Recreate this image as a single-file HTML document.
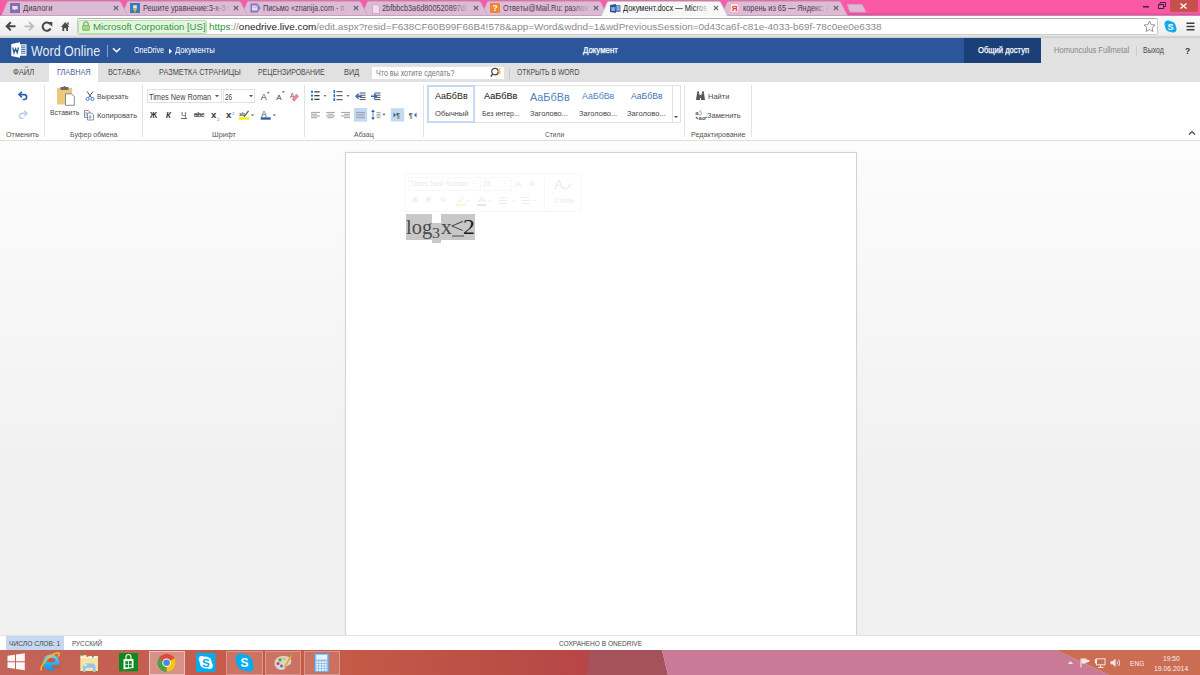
<!DOCTYPE html>
<html><head><meta charset="utf-8">
<style>
*{margin:0;padding:0;box-sizing:border-box}
html,body{width:1200px;height:675px;overflow:hidden;background:#f0f0f0;position:relative;font-family:"Liberation Sans",sans-serif}
.a{position:absolute}
.t{position:absolute;white-space:nowrap;line-height:1;transform-origin:0 0}
svg{position:absolute;overflow:visible}
</style></head><body>
<svg class="a" style="left:0;top:0" width="1200" height="16">
<rect x="0" y="0" width="1200" height="16" fill="#fb58a8"/>
<rect x="0" y="0" width="845" height="1" fill="#e06aa8"/>
<rect x="0" y="13.5" width="1200" height="1.5" fill="#e4509b"/>
<rect x="0" y="15" width="1200" height="1" fill="#c48ba8"/>
<path d="M721.5,15.5 L727,2.5 Q727.6,1.3 729.5,1.3 L838.5,1.3 Q840.2,1.3 840.8,2.5 L847.5,15.5 Z" fill="#dcbbd4" stroke="#c79fb9" stroke-width="0.7"/>
<path d="M481.5,15.5 L487,2.5 Q487.6,1.3 489.5,1.3 L598.5,1.3 Q600.2,1.3 600.8,2.5 L607.5,15.5 Z" fill="#dcbbd4" stroke="#c79fb9" stroke-width="0.7"/>
<path d="M361.5,15.5 L367,2.5 Q367.6,1.3 369.5,1.3 L478.5,1.3 Q480.2,1.3 480.8,2.5 L487.5,15.5 Z" fill="#dcbbd4" stroke="#c79fb9" stroke-width="0.7"/>
<path d="M241.5,15.5 L247,2.5 Q247.6,1.3 249.5,1.3 L358.5,1.3 Q360.2,1.3 360.8,2.5 L367.5,15.5 Z" fill="#dcbbd4" stroke="#c79fb9" stroke-width="0.7"/>
<path d="M121.5,15.5 L127,2.5 Q127.6,1.3 129.5,1.3 L238.5,1.3 Q240.2,1.3 240.8,2.5 L247.5,15.5 Z" fill="#dcbbd4" stroke="#c79fb9" stroke-width="0.7"/>
<path d="M1.5,15.5 L7,2.5 Q7.6,1.3 9.5,1.3 L118.5,1.3 Q120.2,1.3 120.8,2.5 L127.5,15.5 Z" fill="#dcbbd4" stroke="#c79fb9" stroke-width="0.7"/>
<path d="M847.5,4.5 L861,4.5 Q862,4.5 862.6,5.5 L866,12 L851,12 Q850,12 849.6,11 Z" fill="#dcbbd4" stroke="#d9a6c6" stroke-width="0.8"/>
<path d="M601.5,15.5 L607,2.5 Q607.6,1.3 609.5,1.3 L718.5,1.3 Q720.2,1.3 720.8,2.5 L727.5,15.5 " fill="#f7f7f7" stroke="#b9b9b9" stroke-width="0.7"/>
<rect x="601.8" y="14.6" width="124.6" height="2" fill="#f7f7f7"/>
<rect x="1170" y="0" width="28" height="12" fill="#c7504c"/>
<path d="M1180.5,3.5 L1186.5,8.5 M1186.5,3.5 L1180.5,8.5" stroke="#fff" stroke-width="1.4"/>
<rect x="1143" y="6" width="6" height="1.5" fill="#3a2a33"/>
<rect x="1158.5" y="4.5" width="5" height="4" fill="none" stroke="#3a2a33" stroke-width="1"/><path d="M1160,4.5 V2.5 H1165.5 V6.5 H1163.5" fill="none" stroke="#3a2a33" stroke-width="1"/>
</svg>
<svg class="a" style="left:10px;top:3px" width="10" height="10"><rect width="10" height="10" fill="#7b74b0"/><path d="M2.3,3 H7.7 V6.2 H5.6 L4.6,7.6 L4,6.2 H2.3 Z" fill="#f6d9ef"/></svg>
<svg class="a" style="left:130px;top:3px" width="10" height="10"><rect width="10" height="10" fill="#3f7ab4"/><path d="M2.5,5.5 H7.5 L5.6,7.5 L5.4,9.6 H4.6 L4.4,7.5 Z" fill="#f6c21a"/><rect x="3.2" y="2.3" width="3.6" height="3" fill="#e8e6f4"/></svg>
<svg class="a" style="left:250px;top:3px" width="11" height="10"><path d="M0.5,0.5 H7.5 L10.5,5 L7.5,9.5 H0.5 Z" fill="#7d78bf"/><rect x="2" y="2.5" width="5.5" height="5" fill="#f0dff2"/><path d="M2.3,3 L4.7,5 L7.2,3" stroke="#a69bd1" stroke-width="0.8" fill="none"/></svg>
<svg class="a" style="left:371.5px;top:3.5px" width="8" height="10"><path d="M0.5,0.5 H5 L7.5,3 V9.5 H0.5 Z" fill="#f3dcec" stroke="#c7a2bb" stroke-width="0.8"/></svg>
<svg class="a" style="left:490px;top:3px" width="10" height="10"><rect width="10" height="10" rx="1" fill="#ee8530"/><text x="5" y="8.3" font-size="8.5" font-weight="700" text-anchor="middle" fill="#fff" font-family="Liberation Sans">?</text></svg>
<svg class="a" style="left:610px;top:4px" width="11" height="9"><path d="M0,1 L6,0 V9 L0,8 Z" fill="#2b5797"/><rect x="6" y="1" width="4.5" height="7" fill="#5b86c4"/><path d="M7,2.5 H9.5 M7,4 H9.5 M7,5.5 H9.5" stroke="#dbe6f5" stroke-width="0.6"/><text x="3" y="6.5" font-size="4.5" font-weight="700" text-anchor="middle" fill="#c8d8f0" font-family="Liberation Sans">W</text></svg>
<svg class="a" style="left:730px;top:3px" width="10" height="10"><path d="M0.5,0.5 H7.5 L9.5,5 L7.5,9.5 H0.5 Z" fill="#fbe3ea" stroke="#e6a7b8" stroke-width="0.6"/><text x="4.6" y="8.2" font-size="8" font-weight="700" text-anchor="middle" fill="#e3393c" font-family="Liberation Sans">Я</text></svg>
<svg class="a" style="left:112.5px;top:5px" width="6" height="6"><path d="M0.8,0.8 L5.2,5.2 M5.2,0.8 L0.8,5.2" stroke="#6a5865" stroke-width="1.1"/></svg>
<svg class="a" style="left:232.5px;top:5px" width="6" height="6"><path d="M0.8,0.8 L5.2,5.2 M5.2,0.8 L0.8,5.2" stroke="#6a5865" stroke-width="1.1"/></svg>
<svg class="a" style="left:352.5px;top:5px" width="6" height="6"><path d="M0.8,0.8 L5.2,5.2 M5.2,0.8 L0.8,5.2" stroke="#6a5865" stroke-width="1.1"/></svg>
<svg class="a" style="left:472.5px;top:5px" width="6" height="6"><path d="M0.8,0.8 L5.2,5.2 M5.2,0.8 L0.8,5.2" stroke="#6a5865" stroke-width="1.1"/></svg>
<svg class="a" style="left:592.5px;top:5px" width="6" height="6"><path d="M0.8,0.8 L5.2,5.2 M5.2,0.8 L0.8,5.2" stroke="#6a5865" stroke-width="1.1"/></svg>
<svg class="a" style="left:712.5px;top:5px" width="6" height="6"><path d="M0.8,0.8 L5.2,5.2 M5.2,0.8 L0.8,5.2" stroke="#666" stroke-width="1.1"/></svg>
<svg class="a" style="left:832.5px;top:5px" width="6" height="6"><path d="M0.8,0.8 L5.2,5.2 M5.2,0.8 L0.8,5.2" stroke="#6a5865" stroke-width="1.1"/></svg>
<div class="a" style="left:143px;top:0;width:86px;height:15px;overflow:hidden"><div class="t" style="left:0;top:4.00px;font-size:8.5px;color:#4a3d4e;transform:scaleX(0.86)">Решите уравнение:3-x-3=</div></div>
<div class="a" style="left:213px;top:2px;width:17px;height:12px;background:linear-gradient(90deg,#dcbbd400,#dcbbd4)"></div>
<div class="a" style="left:262.75px;top:0;width:86px;height:15px;overflow:hidden"><div class="t" style="left:0;top:4.00px;font-size:8.5px;color:#4a3d4e;transform:scaleX(0.86)">Письмо «znanija.com - п</div></div>
<div class="a" style="left:332.75px;top:2px;width:17px;height:12px;background:linear-gradient(90deg,#dcbbd400,#dcbbd4)"></div>
<div class="a" style="left:382px;top:0;width:86px;height:15px;overflow:hidden"><div class="t" style="left:0;top:4.00px;font-size:8.5px;color:#4a3d4e;transform:scaleX(0.86)">2bfbbcb3a6d800520897d0</div></div>
<div class="a" style="left:452px;top:2px;width:17px;height:12px;background:linear-gradient(90deg,#dcbbd400,#dcbbd4)"></div>
<div class="a" style="left:502.8px;top:0;width:86px;height:15px;overflow:hidden"><div class="t" style="left:0;top:4.00px;font-size:8.5px;color:#4a3d4e;transform:scaleX(0.86)">Ответы@Mail.Ru: разлож</div></div>
<div class="a" style="left:572.8px;top:2px;width:17px;height:12px;background:linear-gradient(90deg,#dcbbd400,#dcbbd4)"></div>
<div class="a" style="left:622.75px;top:0;width:86px;height:15px;overflow:hidden"><div class="t" style="left:0;top:4.00px;font-size:8.5px;color:#222;transform:scaleX(0.88)">Документ.docx — Micros</div></div>
<div class="a" style="left:692.75px;top:2px;width:17px;height:12px;background:linear-gradient(90deg,#f7f7f700,#f7f7f7)"></div>
<div class="a" style="left:742.75px;top:0;width:86px;height:15px;overflow:hidden"><div class="t" style="left:0;top:4.00px;font-size:8.5px;color:#4a3d4e;transform:scaleX(0.86)">корень из 65 — Яндекс: н</div></div>
<div class="a" style="left:812.75px;top:2px;width:17px;height:12px;background:linear-gradient(90deg,#dcbbd400,#dcbbd4)"></div>
<div class="a" style="left:0;top:16px;width:1200px;height:22px;background:linear-gradient(#fbfbfb,#f1f1f1 60%,#e9e9e9)"></div>
<div class="a" style="left:0;top:16px;width:1200px;height:1px;background:#fff"></div>
<div class="a" style="left:0;top:35px;width:1200px;height:1px;background:#e6e6e6"></div>
<div class="a" style="left:0;top:36px;width:1200px;height:2px;background:linear-gradient(#dcdcdc,#c9c9c9)"></div>
<svg class="a" style="left:0;top:15px" width="80" height="22"><path d="M7,11.3 H15.5 M10.8,7.2 L6.7,11.3 L10.8,15.4" stroke="#474747" stroke-width="2" fill="none"/><path d="M24.5,11.3 H33 M29,7.2 L33.2,11.3 L29,15.4" stroke="#bdbdbd" stroke-width="1.8" fill="none"/><path d="M50.3,9.2 A4.2,4.2 0 1 0 50.6,13.5" stroke="#474747" stroke-width="2" fill="none"/><path d="M47.5,7 H52.3 V11.8 Z" fill="#474747"/><path d="M61,12 L65.2,7 L69.4,12 H68 V16 H66.2 V13.3 H64.2 V16 H62.4 V12 Z" fill="#4a4a4a"/><rect x="67.2" y="7.3" width="1.5" height="2.5" fill="#4a4a4a"/></svg>
<div class="a" style="left:76.5px;top:18px;width:1081px;height:17px;background:#fff;border:1px solid #cbcbcb;border-top-color:#b0b0b0;border-radius:2px"></div>
<div class="a" style="left:78px;top:19.5px;width:129px;height:14px;background:#e5f4df;border:1px solid #b6dfa9;border-radius:2px"></div>
<svg class="a" style="left:82px;top:21px" width="8" height="10"><path d="M1.8,4.5 V3 A2.2,2.2 0 0 1 6.2,3 V4.5" stroke="#9a9a9a" stroke-width="1.2" fill="none"/><rect x="0.5" y="4.3" width="7" height="5.2" rx="0.8" fill="#8fd66b" stroke="#6fb24e" stroke-width="0.6"/><rect x="1" y="6.6" width="6" height="0.6" fill="#c9efb1"/></svg>
<svg class="a" style="left:1143px;top:19.7px" width="13" height="13"><path d="M6.5,1 L8.1,4.6 L12,5 L9.1,7.6 L9.9,11.5 L6.5,9.5 L3.1,11.5 L3.9,7.6 L1,5 L4.9,4.6 Z" fill="#fff" stroke="#8a8a8a" stroke-width="0.9" stroke-linejoin="round"/></svg>
<svg class="a" style="left:1163.5px;top:19.6px" width="13" height="13"><circle cx="4" cy="4" r="3.5" fill="#11a9ea"/><circle cx="9" cy="9" r="3.5" fill="#11a9ea"/><circle cx="6.5" cy="6.5" r="5.3" fill="#11a9ea"/><text x="6.5" y="9.8" font-size="9" font-weight="700" text-anchor="middle" fill="#fff" font-family="Liberation Sans">S</text></svg>
<svg class="a" style="left:1185.5px;top:21.5px" width="10" height="10"><path d="M0.5,1.3 H8.5 M0.5,4.5 H8.5 M0.5,7.7 H8.5" stroke="#3c3c3c" stroke-width="1.5"/></svg>
<div class="a" style="left:0;top:38px;width:964px;height:25px;background:#2b579a"></div>
<div class="a" style="left:964px;top:38px;width:77px;height:25px;background:#1b3f77"></div>
<div class="a" style="left:1041px;top:38px;width:159px;height:25px;background:#e1e1e1"></div>
<svg class="a" style="left:10.5px;top:42px" width="17" height="17"><path d="M0.3,2 L9,0.2 V15.8 L0.3,14 Z" fill="#fff"/><rect x="9" y="2.3" width="6.5" height="11.4" fill="#fff"/><path d="M10,4 H14.5 M10,5.8 H14.5 M10,7.6 H14.5 M10,9.4 H14.5 M10,11.2 H14.5" stroke="#2b579a" stroke-width="0.9"/><path d="M1.8,5.5 L3,10.8 L4.6,6.8 L6.2,10.8 L7.4,5.5" stroke="#2b579a" stroke-width="1.3" fill="none"/></svg>
<div class="a" style="left:107px;top:44.5px;width:1px;height:12px;background:#8aa3c9"></div>
<svg class="a" style="left:111.5px;top:47px" width="10" height="7"><path d="M1,1.2 L4.6,4.8 L8.2,1.2" stroke="#fff" stroke-width="1.5" fill="none"/></svg>
<svg class="a" style="left:168px;top:47.5px" width="5" height="7"><path d="M1,0.5 L4,3.2 L1,6 Z" fill="#fff"/></svg>
<div class="a" style="left:1135.5px;top:45.5px;width:1px;height:10px;background:#cdcdcd"></div>
<div class="a" style="left:0;top:63px;width:1200px;height:19px;background:#e1e1e1"></div>
<div class="a" style="left:49px;top:63px;width:48.5px;height:20px;background:#fff"></div>
<div class="a" style="left:372px;top:66.5px;width:132px;height:12.5px;background:#fff"></div>
<svg class="a" style="left:490px;top:67px" width="12" height="11"><circle cx="5" cy="4.6" r="3.3" stroke="#444" stroke-width="1.2" fill="none"/><path d="M2.7,7 L0.8,9.6" stroke="#444" stroke-width="1.4"/><path d="M9.8,1 L7.6,5.2 H9.4 L8,9.4 L11,4.4 H9.3 L10.6,1 Z" fill="#f3a81b"/></svg>
<div class="a" style="left:509px;top:67.5px;width:1px;height:11px;background:#c8c8c8"></div>
<div class="a" style="left:0;top:82px;width:1200px;height:58px;background:#fff"></div>
<div class="a" style="left:0;top:139.5px;width:1200px;height:1px;background:#dedede"></div>
<div class="a" style="left:43.9px;top:85px;width:1px;height:52px;background:#e3e3e3"></div>
<div class="a" style="left:142.0px;top:85px;width:1px;height:52px;background:#e3e3e3"></div>
<div class="a" style="left:304.1px;top:85px;width:1px;height:52px;background:#e3e3e3"></div>
<div class="a" style="left:422.8px;top:85px;width:1px;height:52px;background:#e3e3e3"></div>
<div class="a" style="left:684.1px;top:85px;width:1px;height:52px;background:#e3e3e3"></div>
<div class="a" style="left:750.8px;top:85px;width:1px;height:52px;background:#e3e3e3"></div>
<svg class="a" style="left:17px;top:90px" width="12" height="30"><path d="M2.5,4.6 H7.2 A2.45,2.45 0 0 1 7.2,9.5 H5.5" stroke="#2b63a8" stroke-width="1.6" fill="none"/><path d="M4.9,1.9 L2,4.6 L4.9,7.3" stroke="#2b63a8" stroke-width="1.6" fill="none"/><path d="M9.5,23.4 H4.8 A2.45,2.45 0 0 0 4.8,28.3 H6.5" stroke="#bcd2ea" stroke-width="1.6" fill="none"/><path d="M7.1,20.7 L10,23.4 L7.1,26.1" stroke="#bcd2ea" stroke-width="1.6" fill="none"/></svg>
<svg class="a" style="left:56px;top:86px" width="20" height="21"><rect x="1" y="2" width="15" height="16.5" fill="#edc77a"/><rect x="4.5" y="1" width="8" height="3" fill="#6b6b6b"/><circle cx="8.5" cy="1.2" r="1.2" fill="#6b6b6b"/><path d="M9.5,7.8 H15.5 L18.3,10.6 V19.3 H9.5 Z" fill="#fff" stroke="#7d7d7d" stroke-width="0.9"/></svg>
<svg class="a" style="left:84.5px;top:91px" width="10" height="10"><path d="M2,0.5 L6.8,7 M8,0.5 L3.2,7" stroke="#555" stroke-width="1"/><circle cx="2.6" cy="8" r="1.6" stroke="#4a86c8" stroke-width="1" fill="none"/><circle cx="7.4" cy="8" r="1.6" stroke="#4a86c8" stroke-width="1" fill="none"/></svg>
<svg class="a" style="left:84px;top:109.5px" width="11" height="11"><path d="M0.5,0.5 H4.5 L6,2 V7.5 H0.5 Z" fill="#fff" stroke="#777" stroke-width="0.8"/><path d="M3.5,3 H7.5 L9.5,5 V10 H3.5 Z" fill="#fff" stroke="#777" stroke-width="0.8"/><rect x="4.8" y="5.5" width="2.5" height="3" fill="#8db3de"/><rect x="1.5" y="2" width="1.2" height="4" fill="#8db3de"/></svg>
<div class="a" style="left:147px;top:89.4px;width:74.5px;height:13.6px;border:1px solid #e1e1e1;background:#fff"></div>
<div class="a" style="left:223.4px;top:89.4px;width:32px;height:13.6px;border:1px solid #e1e1e1;background:#fff"></div>
<svg class="a" style="left:215.2px;top:95px" width="4" height="3"><path d="M0,0 H4 L2,2.2 Z" fill="#555"/></svg>
<svg class="a" style="left:248.6px;top:95px" width="4" height="3"><path d="M0,0 H4 L2,2.2 Z" fill="#555"/></svg>
<svg class="a" style="left:259px;top:90px" width="42" height="13"><text x="1.8" y="10" font-size="9" font-family="Liberation Sans" fill="#444">A</text><path d="M7.8,3.2 L9.3,1.6 L10.8,3.2 Z" fill="#2e6bb6"/><text x="17.3" y="10" font-size="8" font-family="Liberation Sans" fill="#444">A</text><path d="M22.8,1.3 H25.8 L24.3,3 Z" fill="#2e6bb6"/><text x="31" y="7.5" font-size="6.5" font-family="Liberation Sans" fill="#555">A</text><path d="M32.5,9.5 L37.3,3.8 L40,6.2 L35.2,11.7 Z" fill="#e58a99"/><path d="M32.3,9.6 L35,12" stroke="#fff" stroke-width="0.6"/></svg>
<div class="a" style="left:180.5px;top:118.3px;width:6px;height:0.9px;background:#666"></div>
<div class="a" style="left:194px;top:114px;width:10px;height:0.7px;background:#888"></div>
<svg class="a" style="left:238px;top:109px" width="16" height="12"><text x="1.2" y="6.8" font-size="5" font-family="Liberation Sans" fill="#555" font-weight="700">ab</text><path d="M6,8 L10.5,1.8" stroke="#555" stroke-width="1.2"/><rect x="0.7" y="8.2" width="10.3" height="2.5" fill="#f6f200"/><path d="M13,5.5 H16 L14.5,7.2 Z" fill="#555"/></svg>
<svg class="a" style="left:260px;top:109px" width="17" height="12"><text x="1.3" y="7.7" font-size="8.2" font-family="Liberation Sans" fill="#444">A</text><rect x="0.7" y="8.3" width="10" height="2.4" fill="#2d5fa8"/><path d="M12.8,5.5 H15.8 L14.3,7.2 Z" fill="#555"/></svg>
<svg class="a" style="left:305px;top:86px" width="120" height="38"><rect x="6" y="4.8" width="2" height="2" fill="#2e6bb6"/><rect x="9.3" y="5.2" width="5.3" height="1.3" fill="#444"/><rect x="6" y="8.6" width="2" height="2" fill="#2e6bb6"/><rect x="9.3" y="9.0" width="5.3" height="1.3" fill="#444"/><rect x="6" y="12.3" width="2" height="2" fill="#2e6bb6"/><rect x="9.3" y="12.700000000000001" width="5.3" height="1.3" fill="#444"/><path d="M18.5,9.2 H21.5 L20,10.8 Z" fill="#444"/><rect x="28.5" y="4.1" width="1.6" height="3" fill="#2e6bb6"/><rect x="31.5" y="5.1" width="6" height="1.1" fill="#555"/><rect x="28.5" y="8.1" width="1.6" height="3" fill="#2e6bb6"/><rect x="31.5" y="9.1" width="6" height="1.1" fill="#555"/><rect x="28.5" y="12.1" width="1.6" height="3" fill="#2e6bb6"/><rect x="31.5" y="13.1" width="6" height="1.1" fill="#555"/><path d="M41.5,9.2 H44.5 L43,10.8 Z" fill="#444"/><rect x="54.6" y="6.5" width="6" height="1" fill="#555"/><rect x="54.6" y="8.7" width="6" height="1" fill="#555"/><rect x="54.6" y="10.9" width="6" height="1" fill="#555"/><rect x="54.6" y="13.1" width="6" height="1" fill="#555"/><path d="M56.6,10.3 H51.1 M53.6,7.8 L51.1,10.3 L53.6,12.8" stroke="#2e6bb6" stroke-width="1.4" fill="none"/><rect x="69.5" y="6.5" width="6" height="1" fill="#555"/><rect x="69.5" y="8.7" width="6" height="1" fill="#555"/><rect x="69.5" y="10.9" width="6" height="1" fill="#555"/><rect x="69.5" y="13.1" width="6" height="1" fill="#555"/><path d="M66.0,10.3 H71.5 M69.0,7.8 L71.5,10.3 L69.0,12.8" stroke="#2e6bb6" stroke-width="1.4" fill="none"/><rect x="6" y="25.9" width="9" height="1.1" fill="#ababab"/><rect x="6" y="27.7" width="6" height="1.1" fill="#ababab"/><rect x="6" y="29.4" width="9" height="1.1" fill="#ababab"/><rect x="6" y="31.1" width="6" height="1.1" fill="#ababab"/><rect x="21" y="25.9" width="9" height="1.1" fill="#ababab"/><rect x="22.5" y="27.7" width="6" height="1.1" fill="#ababab"/><rect x="21" y="29.4" width="9" height="1.1" fill="#ababab"/><rect x="22.5" y="31.1" width="6" height="1.1" fill="#ababab"/><rect x="36" y="25.9" width="9" height="1.1" fill="#ababab"/><rect x="39" y="27.7" width="6" height="1.1" fill="#ababab"/><rect x="36" y="29.4" width="9" height="1.1" fill="#ababab"/><rect x="39" y="31.1" width="6" height="1.1" fill="#ababab"/><rect x="48.9" y="22" width="13.3" height="13.7" fill="#c5d9f1"/><rect x="51" y="25.9" width="9" height="1.3" fill="#9ba6b8"/><rect x="51" y="28.3" width="9" height="1.3" fill="#9ba6b8"/><rect x="51" y="30.8" width="9" height="1.3" fill="#9ba6b8"/><path d="M68,23.5 L66,26 H70 Z M68,34 L66,31.5 H70 Z" fill="#2e6bb6"/><rect x="67.6" y="25" width="0.8" height="7.5" fill="#2e6bb6"/><rect x="71.5" y="25.9" width="4" height="1.1" fill="#ababab"/><rect x="71.5" y="27.7" width="4" height="1.1" fill="#ababab"/><rect x="71.5" y="29.4" width="4" height="1.1" fill="#ababab"/><rect x="71.5" y="31.1" width="4" height="1.1" fill="#ababab"/><path d="M77.5,27.8 H80.5 L79,29.4 Z" fill="#444"/><rect x="85.8" y="22.2" width="13.4" height="13.3" fill="#c5d9f1"/><path d="M88.5,26.5 L91,29 L88.5,31.5 Z" fill="#2e6bb6"/><text x="91" y="32" font-size="7" font-weight="700" font-family="Liberation Sans" fill="#555">¶</text><path d="M111.5,26.5 L109,29 L111.5,31.5 Z" fill="#2e6bb6"/><text x="103.8" y="32" font-size="7" font-weight="700" font-family="Liberation Sans" fill="#555">¶</text></svg>
<div class="a" style="left:427px;top:85px;width:254px;height:37.5px;border:1px solid #e2e2e2;background:#fff"></div>
<div class="a" style="left:671.5px;top:85px;width:1px;height:37.5px;background:#e2e2e2"></div>
<div class="a" style="left:427px;top:85.2px;width:48px;height:37.5px;border:2.5px solid #c5d9f1"></div>
<svg class="a" style="left:673.5px;top:116px" width="4" height="3"><path d="M0,0 H4 L2,2 Z" fill="#444"/></svg>
<svg class="a" style="left:694.5px;top:91px" width="12" height="10"><path d="M1,9 L2,2.5 H4.5 L5,9 Z M6,9 L6.5,2.5 H9 L10,9 Z" fill="#555"/><rect x="4.5" y="4" width="2" height="3" fill="#555"/><rect x="2" y="0.5" width="2" height="2" fill="#555"/><rect x="7" y="0.5" width="2" height="2" fill="#555"/></svg>
<svg class="a" style="left:694.5px;top:109.5px" width="12" height="11"><text x="0.3" y="5.2" font-size="6" font-family="Liberation Sans" fill="#555" font-weight="700">a</text><path d="M4.2,0.8 A2.2,2.2 0 1 1 4.2,5.2" stroke="#8a8a8a" stroke-width="0.8" fill="none"/><text x="3.6" y="10" font-size="6" font-family="Liberation Sans" fill="#555" font-weight="700">ac</text><path d="M0.8,6.8 L3,9 M9.5,9 L11.5,6.8" stroke="#2e6bb6" stroke-width="1.1"/></svg>
<svg class="a" style="left:1187.5px;top:130px" width="8" height="6"><path d="M1,4.5 L4,1.5 L7,4.5" stroke="#444" stroke-width="1.2" fill="none"/></svg>
<div class="a" style="left:0;top:140.5px;width:1200px;height:495px;background:linear-gradient(#fcfcfc,#f6f6f6 35%,#f0f0f0 70%,#f0f0f0)"></div>
<div class="a" style="left:345px;top:152px;width:512px;height:484px;background:#fff;border:1px solid #d4d4d4;border-bottom:none;box-shadow:0 0 2px rgba(0,0,0,0.06)"></div>
<div class="a" style="left:403.5px;top:172.5px;width:177px;height:39.5px;border:1px solid #f6f6f6;background:#fff">
<div class="a" style="left:3.5px;top:3.5px;width:73px;height:14px;border:1px solid #f8f8f8"></div>
<div class="a" style="left:78px;top:3.5px;width:29px;height:14px;border:1px solid #f8f8f8"></div>
<div class="a" style="left:139.5px;top:3px;width:1px;height:33px;background:#f7f7f7"></div>
</div>
<svg class="a" style="left:473.3px;top:183px" width="3" height="2"><path d="M0,0 H3 L1.5,1.5 Z" fill="#eeeeee"/></svg>
<svg class="a" style="left:503.0px;top:183px" width="3" height="2"><path d="M0,0 H3 L1.5,1.5 Z" fill="#eeeeee"/></svg>
<svg class="a" style="left:554px;top:177px" width="19" height="15"><text x="0.5" y="11.5" font-size="13" font-family="Liberation Sans" fill="#e3eaf4">A</text><path d="M9,10 L12,12.5 L17.5,6.5" stroke="#e6ecf4" stroke-width="1.2" fill="none"/></svg>
<div class="a" style="left:455.5px;top:204.2px;width:9.5px;height:1.6px;background:#f8f8c8"></div>
<svg class="a" style="left:456px;top:196px" width="9" height="8"><path d="M2,7 L7.5,1" stroke="#eeeeee" stroke-width="1.2"/></svg>
<div class="a" style="left:477px;top:204.2px;width:9px;height:1.6px;background:#dfe6f2"></div>
<svg class="a" style="left:467.0px;top:200px" width="3" height="2"><path d="M0,0 H3 L1.5,1.5 Z" fill="#eeeeee"/></svg>
<svg class="a" style="left:489.0px;top:200px" width="3" height="2"><path d="M0,0 H3 L1.5,1.5 Z" fill="#eeeeee"/></svg>
<svg class="a" style="left:512.0px;top:200px" width="3" height="2"><path d="M0,0 H3 L1.5,1.5 Z" fill="#eeeeee"/></svg>
<svg class="a" style="left:534.0px;top:200px" width="3" height="2"><path d="M0,0 H3 L1.5,1.5 Z" fill="#eeeeee"/></svg>
<div class="a" style="left:499px;top:197px;width:8px;height:8px;background:repeating-linear-gradient(#eeeeee 0 1px,transparent 1px 3px)"></div>
<div class="a" style="left:522px;top:197px;width:8px;height:8px;background:repeating-linear-gradient(#eeeeee 0 1px,transparent 1px 3px)"></div>
<div class="a" style="left:499px;top:197px;width:2px;height:8px;background:repeating-linear-gradient(#e3eaf4 0 1px,transparent 1px 3px)"></div>
<div class="a" style="left:522px;top:197px;width:2px;height:8px;background:repeating-linear-gradient(#e3eaf4 0 1px,transparent 1px 3px)"></div>
<div class="a" style="left:405.9px;top:214px;width:26.1px;height:25.7px;background:#c8c8c8"></div>
<div class="a" style="left:432px;top:222.7px;width:9px;height:20px;background:#c8c8c8"></div>
<div class="a" style="left:441px;top:214px;width:34px;height:25.7px;background:#c8c8c8"></div>
<div class="a" style="left:452px;top:235px;width:11.5px;height:1.6px;background:#8a8a8a"></div>
<div class="a" style="left:0;top:635px;width:1200px;height:15px;background:#fff;border-top:1px solid #e3e3e3"></div>
<div class="a" style="left:6px;top:636.2px;width:57.8px;height:13.6px;background:#c6d8f0"></div>
<svg class="a" style="left:0;top:650px" width="1200" height="25"><defs><linearGradient id="tbg" x1="0" x2="1" y1="0" y2="0"><stop offset="0" stop-color="#c2645a"/><stop offset="0.33" stop-color="#c45d4d"/><stop offset="0.58" stop-color="#c45a47"/><stop offset="0.93" stop-color="#b84846"/><stop offset="1" stop-color="#b64545"/></linearGradient></defs><rect x="0" y="0" width="600" height="25" fill="url(#tbg)"/><path d="M590,0 L662,0 L668,25 L586.7,25 Z" fill="#a6525b"/><path d="M662,0 L1056,0 L1109,25 L668,25 Z" fill="#c87a97"/><path d="M1056,0 L1200,0 L1200,25 L1109,25 Z" fill="#cb6d53"/></svg>
<div class="a" style="left:148.7px;top:650.5px;width:36.3px;height:24px;background:rgba(255,255,255,0.32);border:1px solid rgba(255,255,255,0.44)"></div>
<div class="a" style="left:225.8px;top:650.5px;width:37.2px;height:24px;background:rgba(255,255,255,0.14);border:1px solid rgba(255,255,255,0.26)"></div>
<div class="a" style="left:265px;top:650.5px;width:36.3px;height:24px;background:rgba(255,255,255,0.14);border:1px solid rgba(255,255,255,0.26)"></div>
<div class="a" style="left:304.2px;top:650.5px;width:35.5px;height:24px;background:rgba(255,255,255,0.14);border:1px solid rgba(255,255,255,0.26)"></div>
<svg class="a" style="left:6.5px;top:653px" width="19" height="18"><path d="M0.5,2.8 L8,1.7 V8.2 H0.5 Z M9,1.5 L17.8,0.3 V8.2 H9 Z M0.5,9.2 H8 V15.8 L0.5,14.7 Z M9,9.2 H17.8 V17.2 L9,16 Z" fill="#fff" opacity="0.95"/></svg>
<svg class="a" style="left:36px;top:650px" width="26" height="25"><defs><linearGradient id="ieg" x1="0" y1="0" x2="0" y2="1"><stop offset="0" stop-color="#7fd3f7"/><stop offset="0.5" stop-color="#2fb2ee"/><stop offset="1" stop-color="#1d8fd6"/></linearGradient></defs><circle cx="15" cy="12.6" r="8.2" fill="url(#ieg)"/><ellipse cx="15.2" cy="10.2" rx="4.3" ry="2.1" fill="#c4584b"/><path d="M16,15.2 H24 V18.8 H18.5 Q16,18.8 16,17 Z" fill="#c4584b"/><path d="M5.5,20.5 C3.5,18.5 8,11 14,6.5 C19,2.8 23,2 23.2,3.5 C23.4,4.5 22.8,5.6 21.8,6.6" stroke="#f2bb1f" stroke-width="1.6" fill="none"/></svg>
<svg class="a" style="left:79px;top:653px" width="21" height="19"><path d="M1.5,2 H7.5 L8.5,3 H19 V18 H1.5 Z" fill="#f0d88a"/><rect x="1.5" y="3.3" width="17.5" height="2.2" fill="#fdf6da"/><rect x="2.3" y="1.2" width="1.8" height="1.6" fill="#32b34a"/><rect x="7.7" y="2.2" width="1.8" height="1.6" fill="#e0463c"/><rect x="13" y="3" width="1.8" height="1.6" fill="#3b9de0"/><rect x="1.5" y="5.5" width="17.5" height="12.5" fill="#f5e4a2"/><path d="M4,14.5 Q4,10.5 7.5,10.5 H13 Q16.5,10.5 16.5,14.5 V19 H14 V14.8 H6.5 V19 H4 Z" fill="#8cc8ef"/><rect x="5" y="11.3" width="3" height="1.5" fill="#dff1fc"/></svg>
<svg class="a" style="left:118.5px;top:653px" width="19" height="18.5"><rect x="0" y="0" width="19" height="18.3" fill="#0a8a1f"/><path d="M4.5,6 H14.5 V15 L4.5,16.5 Z" fill="#fff"/><path d="M7,6 V4 A2.5,2.5 0 0 1 12,4 V6" stroke="#fff" stroke-width="1.1" fill="none"/><rect x="6.3" y="8.2" width="2.7" height="2.7" fill="#0a8a1f"/><rect x="9.8" y="8" width="2.9" height="2.9" fill="#0a8a1f"/><rect x="6.3" y="11.6" width="2.7" height="2.7" fill="#0a8a1f"/><rect x="9.8" y="11.6" width="2.9" height="2.7" fill="#0a8a1f"/></svg>
<svg class="a" style="left:157px;top:652.5px" width="20" height="20"><circle cx="9.6" cy="9.7" r="9" fill="#e14a3b"/><path d="M9.6,9.7 L1.8,14.2 A9,9 0 0 0 9.6,18.7 Z" fill="#47a447"/><path d="M9.6,9.7 L1.8,14.2 A9,9 0 0 1 1.8,5.2 Z" fill="#47a447"/><path d="M9.6,9.7 L17.4,5.2 A9,9 0 0 1 9.6,18.7 Z" fill="#f5c518"/><circle cx="9.6" cy="9.7" r="4.3" fill="#fff"/><circle cx="9.6" cy="9.7" r="3.3" fill="#4a8ad4"/></svg>
<svg class="a" style="left:195.5px;top:653px" width="20" height="19.5"><rect x="0" y="0" width="19.5" height="19" fill="#00aef0"/><circle cx="6" cy="6.3" r="3.3" fill="#fff"/><circle cx="13.5" cy="12.8" r="3.3" fill="#fff"/><circle cx="9.75" cy="9.5" r="6" fill="#fff"/><text x="9.75" y="13.5" font-size="11.5" font-weight="700" text-anchor="middle" fill="#00aef0" font-family="Liberation Sans">S</text></svg>
<svg class="a" style="left:234.5px;top:653px" width="20" height="19.5"><circle cx="5.5" cy="5.5" r="5" fill="#00aef0"/><circle cx="13.8" cy="13.8" r="5" fill="#00aef0"/><circle cx="9.6" cy="9.6" r="8" fill="#00aef0"/><text x="9.6" y="13.8" font-size="12" font-weight="700" text-anchor="middle" fill="#fff" font-family="Liberation Sans">S</text></svg>
<svg class="a" style="left:272.5px;top:653px" width="21" height="19"><path d="M10,3 C16,2.5 19.5,6 18,10 C17,13 14,12 13,14 C12,17 9,17.5 6,16.5 C1.5,15 0.5,10 2.5,6.8 C4,4.5 6.5,3.2 10,3 Z" fill="#d9d5cf"/><circle cx="5" cy="10.5" r="1.6" fill="#e04242"/><circle cx="7" cy="6.8" r="1.6" fill="#44a444"/><circle cx="11" cy="5.8" r="1.5" fill="#f0c020"/><circle cx="8.5" cy="13" r="1.4" fill="#3a7ad0"/><path d="M11.5,14.5 L18.5,2" stroke="#e7a23a" stroke-width="1.6"/><path d="M17.5,2.5 L19.8,0.5" stroke="#c28a5a" stroke-width="2"/></svg>
<svg class="a" style="left:313.5px;top:653px" width="16" height="19.5"><rect x="0.5" y="0.5" width="14.3" height="18.5" rx="1" fill="#8fc0ea" stroke="#5f95c8" stroke-width="0.8"/><rect x="2.3" y="2" width="10.7" height="4.6" fill="#e6f3fc"/><rect x="2.3" y="8.3" width="1.9" height="1.7" fill="#f4f9fd"/><rect x="5.1" y="8.3" width="1.9" height="1.7" fill="#f4f9fd"/><rect x="7.8999999999999995" y="8.3" width="1.9" height="1.7" fill="#f4f9fd"/><rect x="10.7" y="8.3" width="1.9" height="1.7" fill="#f4f9fd"/><rect x="2.3" y="10.9" width="1.9" height="1.7" fill="#f4f9fd"/><rect x="5.1" y="10.9" width="1.9" height="1.7" fill="#f4f9fd"/><rect x="7.8999999999999995" y="10.9" width="1.9" height="1.7" fill="#f4f9fd"/><rect x="10.7" y="10.9" width="1.9" height="1.7" fill="#f4f9fd"/><rect x="2.3" y="13.5" width="1.9" height="1.7" fill="#f4f9fd"/><rect x="5.1" y="13.5" width="1.9" height="1.7" fill="#f4f9fd"/><rect x="7.8999999999999995" y="13.5" width="1.9" height="1.7" fill="#f4f9fd"/><rect x="10.7" y="13.5" width="1.9" height="1.7" fill="#f4f9fd"/><rect x="2.3" y="16.1" width="1.9" height="1.7" fill="#f4f9fd"/><rect x="5.1" y="16.1" width="1.9" height="1.7" fill="#f4f9fd"/><rect x="7.8999999999999995" y="16.1" width="1.9" height="1.7" fill="#f4f9fd"/><rect x="10.7" y="16.1" width="1.9" height="1.7" fill="#f4f9fd"/></svg>
<svg class="a" style="left:1066px;top:656px" width="60" height="13"><path d="M2,8 L4.5,5 L7,8 Z" fill="#f2e4ea"/><path d="M15,2.5 V11.5" stroke="#f4e6e6" stroke-width="1.1"/><path d="M15.5,2.5 H20.5 V3.5 L24.3,4.5 L22,6.5 H20 V7.5 H15.5 Z" fill="#f4e6e6"/><rect x="30.5" y="2.8" width="8.5" height="6" fill="none" stroke="#f4e6e6" stroke-width="1"/><path d="M34.5,9 V11 M32,11.5 H37.5" stroke="#f4e6e6" stroke-width="1"/><path d="M29.6,3 V7.5" stroke="#f4e6e6" stroke-width="1.4"/><path d="M44.5,5.2 H46.5 L49.5,2.5 V11 L46.5,8.3 H44.5 Z" fill="#f4e6e6"/><path d="M51,5 Q52,6.8 51,8.5 M52.8,3.5 Q54.6,6.8 52.8,10" stroke="#f4e6e6" stroke-width="0.9" fill="none"/></svg>
<div class="t" style="left:22.50px;top:4px;font-size:8.5px;font-family:'Liberation Sans',sans-serif;color:#4a3d4e;font-weight:400;transform:scaleX(0.8939);">Диалоги</div>
<div class="t" style="left:93.00px;top:23px;font-size:9.3px;font-family:'Liberation Sans',sans-serif;color:#2c9a3b;font-weight:400;transform:scaleX(1.0275);">Microsoft Corporation [US]</div>
<div class="t" style="left:208.96px;top:22px;font-size:9.6px;font-family:'Liberation Sans',sans-serif;color:#8a8a8a;font-weight:400;transform:scaleX(1.0363);"><span style="color:#2c9a3b">https</span><span style="color:#8a8a8a">://</span><span style="color:#222">onedrive.live.com</span><span style="color:#8a8a8a">/edit.aspx?resid=F638CF60B99F66B4!578&amp;app=Word&amp;wdnd=1&amp;wdPreviousSession=0d43ca6f-c81e-4033-b69f-78c0ee0e6338</span></div>
<div class="t" style="left:31.25px;top:45px;font-size:13.8px;font-family:'Liberation Sans',sans-serif;color:rgba(255,255,255,0.9);font-weight:400;transform:scaleX(0.9046);">Word Online</div>
<div class="t" style="left:134.00px;top:46px;font-size:8.5px;font-family:'Liberation Sans',sans-serif;color:#fff;font-weight:400;transform:scaleX(0.8333);">OneDrive</div>
<div class="t" style="left:175.00px;top:46px;font-size:8.5px;font-family:'Liberation Sans',sans-serif;color:#fff;font-weight:400;transform:scaleX(0.9091);">Документы</div>
<div class="t" style="left:583.00px;top:46px;font-size:8.8px;font-family:'Liberation Sans',sans-serif;color:#fff;font-weight:400;transform:scaleX(0.8947);-webkit-text-stroke:0.25px #fff;">Документ</div>
<div class="t" style="left:977.50px;top:46px;font-size:8.8px;font-family:'Liberation Sans',sans-serif;color:#fff;font-weight:400;transform:scaleX(0.8644);-webkit-text-stroke:0.25px #fff;">Общий доступ</div>
<div class="t" style="left:1054.00px;top:46px;font-size:8.5px;font-family:'Liberation Sans',sans-serif;color:#878787;font-weight:400;transform:scaleX(0.8929);">Homunculus Fullmetal</div>
<div class="t" style="left:1142.70px;top:46px;font-size:8.5px;font-family:'Liberation Sans',sans-serif;color:#4a4a4a;font-weight:400;transform:scaleX(0.8192);">Выход</div>
<div class="t" style="left:1185.30px;top:46px;font-size:9.5px;font-family:'Liberation Sans',sans-serif;color:#333;font-weight:700;transform:scaleX(0.9000);">?</div>
<div class="t" style="left:12.50px;top:69px;font-size:8.2px;font-family:'Liberation Sans',sans-serif;color:#4b4b4b;font-weight:400;transform:scaleX(0.9348);">ФАЙЛ</div>
<div class="t" style="left:56.90px;top:69px;font-size:8.2px;font-family:'Liberation Sans',sans-serif;color:#4d5f99;font-weight:400;transform:scaleX(0.8946);">ГЛАВНАЯ</div>
<div class="t" style="left:108.10px;top:69px;font-size:8.2px;font-family:'Liberation Sans',sans-serif;color:#4b4b4b;font-weight:400;transform:scaleX(0.8784);">ВСТАВКА</div>
<div class="t" style="left:158.80px;top:69px;font-size:8.2px;font-family:'Liberation Sans',sans-serif;color:#4b4b4b;font-weight:400;transform:scaleX(0.8956);">РАЗМЕТКА СТРАНИЦЫ</div>
<div class="t" style="left:258.30px;top:69px;font-size:8.2px;font-family:'Liberation Sans',sans-serif;color:#4b4b4b;font-weight:400;transform:scaleX(0.8468);">РЕЦЕНЗИРОВАНИЕ</div>
<div class="t" style="left:344.00px;top:69px;font-size:8.2px;font-family:'Liberation Sans',sans-serif;color:#4b4b4b;font-weight:400;transform:scaleX(0.8941);">ВИД</div>
<div class="t" style="left:375.90px;top:70px;font-size:8.2px;font-family:'Liberation Sans',sans-serif;color:#777;font-weight:400;transform:scaleX(0.8659);">Что вы хотите сделать?</div>
<div class="t" style="left:516.60px;top:69px;font-size:8.2px;font-family:'Liberation Sans',sans-serif;color:#4b4b4b;font-weight:400;transform:scaleX(0.8307);">ОТКРЫТЬ В WORD</div>
<div class="t" style="left:5.80px;top:131px;font-size:7.6px;font-family:'Liberation Sans',sans-serif;color:#555;font-weight:400;transform:scaleX(0.9514);">Отменить</div>
<div class="t" style="left:70.00px;top:131px;font-size:7.6px;font-family:'Liberation Sans',sans-serif;color:#555;font-weight:400;transform:scaleX(0.9192);">Буфер обмена</div>
<div class="t" style="left:212.00px;top:131px;font-size:7.6px;font-family:'Liberation Sans',sans-serif;color:#555;font-weight:400;transform:scaleX(0.9520);">Шрифт</div>
<div class="t" style="left:354.30px;top:131px;font-size:7.6px;font-family:'Liberation Sans',sans-serif;color:#555;font-weight:400;transform:scaleX(0.9227);">Абзац</div>
<div class="t" style="left:544.80px;top:131px;font-size:7.6px;font-family:'Liberation Sans',sans-serif;color:#555;font-weight:400;transform:scaleX(0.8727);">Стили</div>
<div class="t" style="left:690.80px;top:131px;font-size:7.6px;font-family:'Liberation Sans',sans-serif;color:#555;font-weight:400;transform:scaleX(0.9431);">Редактирование</div>
<div class="t" style="left:49.80px;top:109px;font-size:8px;font-family:'Liberation Sans',sans-serif;color:#4a4a4a;font-weight:400;transform:scaleX(0.8618);">Вставить</div>
<div class="t" style="left:96.70px;top:93px;font-size:7.6px;font-family:'Liberation Sans',sans-serif;color:#4a4a4a;font-weight:400;transform:scaleX(0.9265);">Вырезать</div>
<div class="t" style="left:96.70px;top:112px;font-size:7.6px;font-family:'Liberation Sans',sans-serif;color:#4a4a4a;font-weight:400;transform:scaleX(0.9805);">Копировать</div>
<div class="t" style="left:149.00px;top:94px;font-size:8.2px;font-family:'Liberation Sans',sans-serif;color:#444;font-weight:400;transform:scaleX(0.8971);">Times New Roman</div>
<div class="t" style="left:225.00px;top:94px;font-size:8.2px;font-family:'Liberation Sans',sans-serif;color:#444;font-weight:400;transform:scaleX(0.7778);">26</div>
<div class="t" style="left:149.90px;top:112px;font-size:8.2px;font-family:'Liberation Sans',sans-serif;color:#333;font-weight:700;transform:scaleX(0.9375);">Ж</div>
<div class="t" style="left:165.80px;top:112px;font-size:8.2px;font-family:'Liberation Sans',sans-serif;color:#333;font-weight:700;transform:scaleX(0.9500);font-style:italic;">К</div>
<div class="t" style="left:181.00px;top:112px;font-size:8.2px;font-family:'Liberation Sans',sans-serif;color:#555;font-weight:400;transform:scaleX(1.0000);">Ч</div>
<div class="t" style="left:193.90px;top:112px;font-size:6.8px;font-family:'Liberation Sans',sans-serif;color:#444;font-weight:400;transform:scaleX(0.9900);letter-spacing:-0.3px;-webkit-text-stroke:0.2px #444;">abc</div>
<div class="t" style="left:211.30px;top:111px;font-size:8.5px;font-family:'Liberation Sans',sans-serif;color:#333;font-weight:700;transform:scaleX(1.1400);">x</div>
<div class="t" style="left:217.20px;top:118px;font-size:4px;font-family:'Liberation Sans',sans-serif;color:#2e6bb6;font-weight:400;transform:scaleX(1.0000);">2</div>
<div class="t" style="left:226.30px;top:111px;font-size:8.5px;font-family:'Liberation Sans',sans-serif;color:#333;font-weight:700;transform:scaleX(1.1400);">x</div>
<div class="t" style="left:232.00px;top:112px;font-size:4px;font-family:'Liberation Sans',sans-serif;color:#2e6bb6;font-weight:400;transform:scaleX(1.0000);">2</div>
<div class="t" style="left:435.40px;top:91px;font-size:9.6px;font-family:'Liberation Sans',sans-serif;color:#222;font-weight:400;transform:scaleX(0.9286);">АаБбВв</div>
<div class="t" style="left:435.00px;top:110px;font-size:7.6px;font-family:'Liberation Sans',sans-serif;color:#444;font-weight:400;transform:scaleX(0.9970);">Обычный</div>
<div class="t" style="left:483.80px;top:91px;font-size:9.4px;font-family:'Liberation Sans',sans-serif;color:#2a2a2a;font-weight:400;transform:scaleX(0.9706);-webkit-text-stroke:0.12px #2a2a2a;">АаБбВв</div>
<div class="t" style="left:481.50px;top:110px;font-size:7.6px;font-family:'Liberation Sans',sans-serif;color:#444;font-weight:400;transform:scaleX(0.9146);">Без интер...</div>
<div class="t" style="left:529.60px;top:92px;font-size:11px;font-family:'Liberation Sans',sans-serif;color:#4f81bd;font-weight:400;transform:scaleX(0.9850);">АаБбВв</div>
<div class="t" style="left:530.02px;top:110px;font-size:7.6px;font-family:'Liberation Sans',sans-serif;color:#444;font-weight:400;transform:scaleX(0.9784);">Заголово...</div>
<div class="t" style="left:581.50px;top:91px;font-size:9.5px;font-family:'Liberation Sans',sans-serif;color:#4f81bd;font-weight:400;transform:scaleX(0.9286);">АаБбВв</div>
<div class="t" style="left:578.51px;top:110px;font-size:7.6px;font-family:'Liberation Sans',sans-serif;color:#444;font-weight:400;transform:scaleX(0.9865);">Заголово...</div>
<div class="t" style="left:630.50px;top:92px;font-size:9px;font-family:'Liberation Sans',sans-serif;color:#4372b0;font-weight:400;transform:scaleX(0.9545);">АаБбВв</div>
<div class="t" style="left:627.00px;top:110px;font-size:7.6px;font-family:'Liberation Sans',sans-serif;color:#444;font-weight:400;transform:scaleX(1.0000);">Заголово...</div>
<div class="t" style="left:707.80px;top:93px;font-size:7.8px;font-family:'Liberation Sans',sans-serif;color:#4a4a4a;font-weight:400;transform:scaleX(0.9591);">Найти</div>
<div class="t" style="left:706.84px;top:112px;font-size:7.8px;font-family:'Liberation Sans',sans-serif;color:#4a4a4a;font-weight:400;transform:scaleX(0.9618);">Заменить</div>
<div class="t" style="left:409.50px;top:180px;font-size:7.8px;font-family:'Liberation Sans',sans-serif;color:#ebebeb;font-weight:400;transform:scaleX(0.8788);">Times New Roman</div>
<div class="t" style="left:483.50px;top:180px;font-size:7.8px;font-family:'Liberation Sans',sans-serif;color:#ebebeb;font-weight:400;transform:scaleX(0.8333);">26</div>
<div class="t" style="left:515.00px;top:180px;font-size:8.5px;font-family:'Liberation Sans',sans-serif;color:#ebebeb;font-weight:400;transform:scaleX(1.0833);">A</div>
<div class="t" style="left:529.00px;top:180px;font-size:7.2px;font-family:'Liberation Sans',sans-serif;color:#ebebeb;font-weight:400;transform:scaleX(1.0000);">A</div>
<div class="t" style="left:553.50px;top:198px;font-size:6.8px;font-family:'Liberation Sans',sans-serif;color:#ebebeb;font-weight:400;transform:scaleX(1.0263);">Стили</div>
<div class="t" style="left:411.50px;top:196px;font-size:7.2px;font-family:'Liberation Sans',sans-serif;color:#ebebeb;font-weight:700;transform:scaleX(0.9286);">Ж</div>
<div class="t" style="left:425.50px;top:196px;font-size:7.2px;font-family:'Liberation Sans',sans-serif;color:#ebebeb;font-weight:700;transform:scaleX(1.1000);font-style:italic;">К</div>
<div class="t" style="left:439.50px;top:196px;font-size:7.2px;font-family:'Liberation Sans',sans-serif;color:#ebebeb;font-weight:400;transform:scaleX(1.1000);">Ч</div>
<div class="t" style="left:477.50px;top:196px;font-size:7.5px;font-family:'Liberation Sans',sans-serif;color:#ebebeb;font-weight:400;transform:scaleX(1.5000);">A</div>
<div class="t" style="left:406.00px;top:216px;font-size:22px;font-family:'Liberation Serif',serif;color:#4a4a4a;font-weight:400;transform:scaleX(0.9286);">log</div>
<div class="t" style="left:432.20px;top:225px;font-size:15.5px;font-family:'Liberation Serif',serif;color:#4a4a4a;font-weight:400;transform:scaleX(1.0375);">3</div>
<div class="t" style="left:441.00px;top:216px;font-size:22px;font-family:'Liberation Serif',serif;color:#4a4a4a;font-weight:400;transform:scaleX(0.9818);">x</div>
<div class="t" style="left:450.27px;top:216px;font-size:20px;font-family:'Liberation Serif',serif;color:#4a4a4a;font-weight:400;transform:scaleX(1.2300);">&lt;</div>
<div class="t" style="left:463.22px;top:216px;font-size:22px;font-family:'Liberation Serif',serif;color:#1a1a1a;font-weight:400;transform:scaleX(1.0778);">2</div>
<div class="t" style="left:9.00px;top:640px;font-size:7.6px;font-family:'Liberation Sans',sans-serif;color:#4a4a4a;font-weight:400;transform:scaleX(0.8793);">ЧИСЛО СЛОВ: 1</div>
<div class="t" style="left:72.00px;top:640px;font-size:7.6px;font-family:'Liberation Sans',sans-serif;color:#4a4a4a;font-weight:400;transform:scaleX(0.8333);">РУССКИЙ</div>
<div class="t" style="left:559.00px;top:640px;font-size:7.6px;font-family:'Liberation Sans',sans-serif;color:#4a4a4a;font-weight:400;transform:scaleX(0.8615);">СОХРАНЕНО В ONEDRIVE</div>
<div class="t" style="left:1129.80px;top:660px;font-size:8px;font-family:'Liberation Sans',sans-serif;color:#f7eeee;font-weight:400;transform:scaleX(0.8235);">ENG</div>
<div class="t" style="left:1163.04px;top:655px;font-size:7.8px;font-family:'Liberation Sans',sans-serif;color:#f7eeee;font-weight:400;transform:scaleX(0.8579);">19:50</div>
<div class="t" style="left:1154.22px;top:665px;font-size:7.8px;font-family:'Liberation Sans',sans-serif;color:#f7eeee;font-weight:400;transform:scaleX(0.8763);">19.06.2014</div>

</body></html>
